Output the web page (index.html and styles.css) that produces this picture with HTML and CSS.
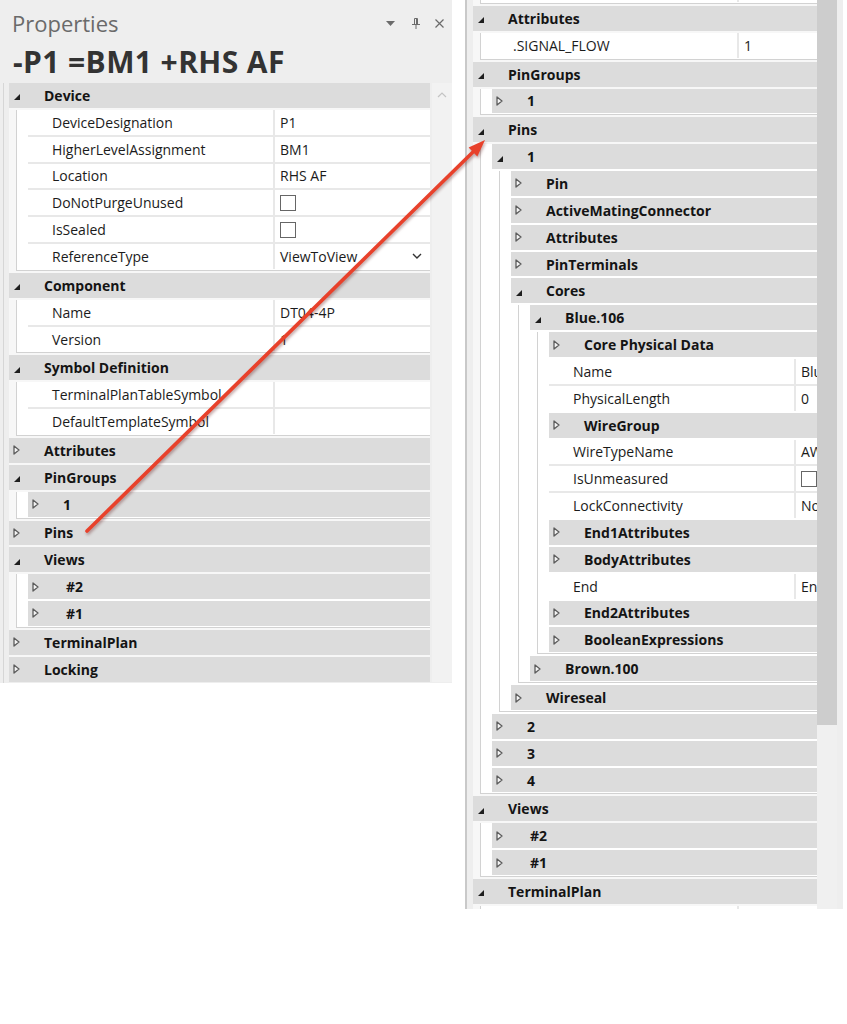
FILE: index.html
```html
<!DOCTYPE html>
<html>
<head>
<meta charset="utf-8">
<title>Properties</title>
<link rel="stylesheet" href="styles.css">
</head>
<body>
<svg class="defs" aria-hidden="true">
  <defs>
    <symbol id="exp" viewBox="0 0 6 6"><path d="M6 0V6H0Z" fill="#1e1e1e"/></symbol>
    <symbol id="col" viewBox="0 0 7 10"><path d="M1 1L6 5L1 9Z" fill="#f4f4f4" stroke="#5c5c5c" stroke-width="1.3" stroke-linejoin="round"/></symbol>
  </defs>
</svg>
<div class="page">
  <section class="panel left">
    <div class="titlebar">
      <span class="title">Properties</span>
      <span class="tools">
        <svg class="t-drop" width="9" height="5" viewBox="0 0 9 5"><path d="M0 0H9L4.5 5Z" fill="#6b6b6b"/></svg>
        <svg class="t-pin" width="8" height="11" viewBox="0 0 8 11"><path d="M2.5 0.5H5.5V6.5M2.5 0.5V6.5M0 6.5H8M4 6.5V11" fill="none" stroke="#6b6b6b" stroke-width="1"/><path d="M4.5 0.5V6.5" stroke="#6b6b6b" stroke-width="1"/></svg>
        <svg class="t-close" width="9" height="9" viewBox="0 0 9 9"><path d="M0.5 0.5L8.5 8.5M8.5 0.5L0.5 8.5" stroke="#6b6b6b" stroke-width="1.2"/></svg>
      </span>
    </div>
    <div class="objname">-P1 =BM1 +RHS AF</div>
    <div class="gridwrap">
      <div class="tree">
        <div class="grp">
          <div class="hdr"><span class="tg"><svg class="ex"><use href="#exp"/></svg></span><span>Device</span></div>
          <div class="kids">
            <div class="prop"><span class="k">DeviceDesignation</span><span class="v">P1</span></div>
            <div class="prop"><span class="k">HigherLevelAssignment</span><span class="v">BM1</span></div>
            <div class="prop"><span class="k">Location</span><span class="v">RHS AF</span></div>
            <div class="prop"><span class="k">DoNotPurgeUnused</span><span class="v"><span class="cb"></span></span></div>
            <div class="prop"><span class="k">IsSealed</span><span class="v"><span class="cb"></span></span></div>
            <div class="prop"><span class="k">ReferenceType</span><span class="v">ViewToView<svg class="chev" width="10" height="6" viewBox="0 0 10 6"><path d="M1 1L5 5L9 1" fill="none" stroke="#333" stroke-width="1.4"/></svg></span></div>
          </div>
        </div>
        <div class="grp">
          <div class="hdr"><span class="tg"><svg class="ex"><use href="#exp"/></svg></span><span>Component</span></div>
          <div class="kids">
            <div class="prop"><span class="k">Name</span><span class="v">DT04-4P</span></div>
            <div class="prop"><span class="k">Version</span><span class="v">1</span></div>
          </div>
        </div>
        <div class="grp">
          <div class="hdr"><span class="tg"><svg class="ex"><use href="#exp"/></svg></span><span>Symbol Definition</span></div>
          <div class="kids">
            <div class="prop"><span class="k">TerminalPlanTableSymbol</span><span class="v"></span></div>
            <div class="prop"><span class="k">DefaultTemplateSymbol</span><span class="v"></span></div>
          </div>
        </div>
        <div class="hdr"><span class="tg"><svg class="co"><use href="#col"/></svg></span><span>Attributes</span></div>
        <div class="grp">
          <div class="hdr"><span class="tg"><svg class="ex"><use href="#exp"/></svg></span><span>PinGroups</span></div>
          <div class="kids">
            <div class="hdr"><span class="tg"><svg class="co"><use href="#col"/></svg></span><span>1</span></div>
          </div>
        </div>
        <div class="hdr"><span class="tg"><svg class="co"><use href="#col"/></svg></span><span>Pins</span></div>
        <div class="grp">
          <div class="hdr"><span class="tg"><svg class="ex"><use href="#exp"/></svg></span><span>Views</span></div>
          <div class="kids">
            <div class="hdr"><span class="tg"><svg class="co"><use href="#col"/></svg></span><span class="hash">#2</span></div>
            <div class="hdr"><span class="tg"><svg class="co"><use href="#col"/></svg></span><span class="hash">#1</span></div>
          </div>
        </div>
        <div class="hdr"><span class="tg"><svg class="co"><use href="#col"/></svg></span><span>TerminalPlan</span></div>
        <div class="hdr"><span class="tg"><svg class="co"><use href="#col"/></svg></span><span>Locking</span></div>
      </div>
      <div class="vscroll"><svg width="10" height="6" viewBox="0 0 10 6"><path d="M1 5L5 1L9 5" fill="none" stroke="#c4c4c4" stroke-width="1.2"/></svg></div>
    </div>
  </section>

  <section class="panel right">
    <div class="tree">
      <div class="kids">
        <div class="prop stub"><span class="k"></span><span class="v"></span></div>
      </div>
      <div class="grp">
        <div class="hdr"><span class="tg"><svg class="ex"><use href="#exp"/></svg></span><span>Attributes</span></div>
        <div class="kids">
          <div class="prop"><span class="k k-short">.SIGNAL_FLOW</span><span class="v">1</span></div>
        </div>
      </div>
      <div class="grp">
        <div class="hdr"><span class="tg"><svg class="ex"><use href="#exp"/></svg></span><span>PinGroups</span></div>
        <div class="kids">
          <div class="hdr"><span class="tg"><svg class="co"><use href="#col"/></svg></span><span>1</span></div>
        </div>
      </div>
      <div class="grp">
        <div class="hdr"><span class="tg"><svg class="ex"><use href="#exp"/></svg></span><span>Pins</span></div>
        <div class="kids">
          <div class="grp">
            <div class="hdr"><span class="tg"><svg class="ex"><use href="#exp"/></svg></span><span>1</span></div>
            <div class="kids">
              <div class="hdr"><span class="tg"><svg class="co"><use href="#col"/></svg></span><span>Pin</span></div>
              <div class="hdr"><span class="tg"><svg class="co"><use href="#col"/></svg></span><span>ActiveMatingConnector</span></div>
              <div class="hdr"><span class="tg"><svg class="co"><use href="#col"/></svg></span><span>Attributes</span></div>
              <div class="hdr"><span class="tg"><svg class="co"><use href="#col"/></svg></span><span>PinTerminals</span></div>
              <div class="grp">
                <div class="hdr"><span class="tg"><svg class="ex"><use href="#exp"/></svg></span><span>Cores</span></div>
                <div class="kids">
                  <div class="grp">
                    <div class="hdr"><span class="tg"><svg class="ex"><use href="#exp"/></svg></span><span>Blue.106</span></div>
                    <div class="kids">
                      <div class="hdr"><span class="tg"><svg class="co"><use href="#col"/></svg></span><span>Core Physical Data</span></div>
                      <div class="prop"><span class="k">Name</span><span class="v">Blue.106</span></div>
                      <div class="prop"><span class="k">PhysicalLength</span><span class="v">0</span></div>
                      <div class="hdr"><span class="tg"><svg class="co"><use href="#col"/></svg></span><span>WireGroup</span></div>
                      <div class="prop"><span class="k">WireTypeName</span><span class="v">AWG18</span></div>
                      <div class="prop"><span class="k">IsUnmeasured</span><span class="v"><span class="cb"></span></span></div>
                      <div class="prop"><span class="k">LockConnectivity</span><span class="v">None</span></div>
                      <div class="hdr"><span class="tg"><svg class="co"><use href="#col"/></svg></span><span>End1Attributes</span></div>
                      <div class="hdr"><span class="tg"><svg class="co"><use href="#col"/></svg></span><span>BodyAttributes</span></div>
                      <div class="prop"><span class="k">End</span><span class="v">End1</span></div>
                      <div class="hdr"><span class="tg"><svg class="co"><use href="#col"/></svg></span><span>End2Attributes</span></div>
                      <div class="hdr"><span class="tg"><svg class="co"><use href="#col"/></svg></span><span>BooleanExpressions</span></div>
                    </div>
                  </div>
                  <div class="hdr"><span class="tg"><svg class="co"><use href="#col"/></svg></span><span>Brown.100</span></div>
                </div>
              </div>
              <div class="hdr"><span class="tg"><svg class="co"><use href="#col"/></svg></span><span>Wireseal</span></div>
            </div>
          </div>
          <div class="hdr"><span class="tg"><svg class="co"><use href="#col"/></svg></span><span>2</span></div>
          <div class="hdr"><span class="tg"><svg class="co"><use href="#col"/></svg></span><span>3</span></div>
          <div class="hdr"><span class="tg"><svg class="co"><use href="#col"/></svg></span><span>4</span></div>
        </div>
      </div>
      <div class="grp">
        <div class="hdr"><span class="tg"><svg class="ex"><use href="#exp"/></svg></span><span>Views</span></div>
        <div class="kids">
          <div class="hdr"><span class="tg"><svg class="co"><use href="#col"/></svg></span><span class="hash">#2</span></div>
          <div class="hdr"><span class="tg"><svg class="co"><use href="#col"/></svg></span><span class="hash">#1</span></div>
        </div>
      </div>
      <div class="grp">
        <div class="hdr"><span class="tg"><svg class="ex"><use href="#exp"/></svg></span><span>TerminalPlan</span></div>
        <div class="kids">
          <div class="prop"><span class="k"></span><span class="v"></span></div>
        </div>
      </div>
    </div>
    <div class="vscroll2"><div class="thumb"></div></div>
  </section>
</div>
<svg class="arrow" width="847" height="1024" viewBox="0 0 847 1024" aria-hidden="true">
  <line x1="87" y1="531" x2="474" y2="151" stroke="#e8412b" stroke-width="3.6" stroke-linecap="round"/>
  <polygon points="485,140 477.3,156.5 468.6,147.6" fill="#e8412b"/>
</svg>
</body>
</html>
```

FILE: styles.css
```css
* { box-sizing: border-box; }
html, body { margin: 0; padding: 0; background: #ffffff; }
body {
  font-family: "Open Sans", "Noto Sans", sans-serif;
  color: #1b1b1b;
  width: 847px;
  height: 1024px;
  position: relative;
  overflow: hidden;
}
.defs { position: absolute; width: 0; height: 0; }

.page { display: flex; align-items: flex-start; }

/* ---------- left panel ---------- */
.left {
  width: 452px;
  background: #eeeeee;
  display: flex;
  flex-direction: column;
}
.titlebar {
  display: flex;
  height: 42px;
  padding: 8px 8px 4px 12px;
}
.title { font-size: 22px; line-height: 30px; color: #6a6a6a; }
.tools { margin-left: auto; display: flex; align-items: center; height: 30px; }
.tools svg { display: block; }
.t-drop { margin-right: 17px; }
.t-pin { margin-right: 15px; }

.objname {
  font-size: 30px;
  font-weight: 700;
  letter-spacing: 0.4px;
  line-height: 34px;
  padding: 3px 0 4px 13px;
  color: #333333;
  white-space: nowrap;
}

.gridwrap {
  display: flex;
  column-gap: 2px;
  margin-left: 3px;
  border-left: 1px solid #d6d6d6;
  padding-left: 5px;
  padding-bottom: 1px;
}
.gridwrap .tree { flex: 1; }
.vscroll {
  width: 20px;
  flex: none;
  background: #f2f2f2;
  display: flex;
  justify-content: center;
  align-items: flex-start;
  padding-top: 9px;
}

/* ---------- property tree ---------- */
.tree {
  display: flex;
  flex-direction: column;
  gap: 2px;
  background: #f7f7f7;
  min-width: 0;
  overflow: hidden;
}
.grp { display: flex; flex-direction: column; gap: 2px; }
.hdr {
  height: 24.85px;
  flex: none;
  background: #dcdcdc;
  display: flex;
  align-items: center;
  font-size: 14px;
  font-weight: 700;
  color: #141414;
  white-space: nowrap;
}
.tg {
  width: 35px;
  flex: none;
  padding-left: 4px;
  display: flex;
  align-items: center;
}
.ex { width: 6px; height: 6px; margin-left: 1px; transform: translateY(2px); display: block; }
.co { width: 7px; height: 10px; display: block; }
.hash { padding-left: 3px; }

.kids {
  display: flex;
  flex-direction: column;
  gap: 2px;
  margin-left: 7px;
  border-left: 1px solid #d2d2d2;
  border-bottom: 1px solid #d2d2d2;
  padding: 0 0 1px 11px;
  background: #ffffff;
}
.prop {
  height: 24.85px;
  flex: none;
  display: grid;
  grid-template-columns: 245px minmax(0, 1fr);
  column-gap: 2px;
  background: #e8e8e8;
  font-size: 14px;
  color: #1b1b1b;
}
.prop + .prop { box-shadow: 0 -2px 0 #e8e8e8; }
.prop.stub { height: 2px; }
.k, .v {
  background: #ffffff;
  display: flex;
  align-items: center;
  white-space: nowrap;
  overflow: hidden;
}
.k { padding-left: 24px; }
.k-short { padding-left: 21px; }
.v { padding-left: 5px; }
.chev { margin-left: auto; margin-right: 8px; flex: none; }
.cb {
  width: 16px;
  height: 16px;
  flex: none;
  border: 1px solid #666666;
  background: #ffffff;
}

/* ---------- right panel ---------- */
.right {
  margin-left: 13px;
  width: 378px;
  height: 909px;
  background: #eeeeee;
  border-left: 2px solid #c9c9c9;
  padding-left: 6px;
  padding-right: 6px;
  display: flex;
  align-items: flex-start;
  overflow: hidden;
}
.right .tree { flex: 1; }
.vscroll2 { width: 20px; flex: none; align-self: stretch; background: #f0f0f0; }
.thumb { height: 725px; background: #cdcdcd; }

/* ---------- annotation arrow ---------- */
.arrow {
  position: absolute;
  left: 0;
  top: 0;
  pointer-events: none;
  filter: drop-shadow(1px 2px 1.5px rgba(80, 0, 0, 0.35));
}
```
